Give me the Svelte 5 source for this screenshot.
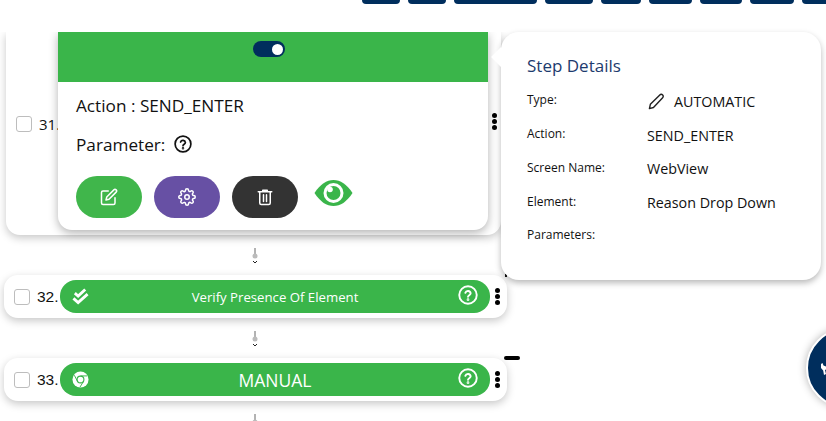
<script lang="ts">
  const topButtons = [38, 38, 83, 48, 40, 43, 42, 44, 40];

  const details = [
    { label: 'Type:', value: 'AUTOMATIC', pencil: true },
    { label: 'Action:', value: 'SEND_ENTER' },
    { label: 'Screen Name:', value: 'WebView' },
    { label: 'Element:', value: 'Reason Drop Down' },
    { label: 'Parameters:', value: '' }
  ];
</script>

{#snippet help(cls)}
  <svg class={cls} viewBox="0 0 24 24" fill="none" stroke="currentColor" stroke-width="2.3" stroke-linecap="round">
    <circle cx="12" cy="12" r="10.5" />
    <path d="M8.8 9.4a3.3 3.3 0 0 1 6.4 .6c0 2.1-3.2 2.4-3.2 4.2" />
    <circle cx="12" cy="17.6" r="0.5" fill="currentColor" />
  </svg>
{/snippet}

{#snippet dots()}
  <div class="dots"><span></span><span></span><span></span></div>
{/snippet}

{#snippet connector()}
  <div class="connector">
    <svg width="8" height="16" viewBox="0 0 8 16" fill="none">
      <path d="M4 0v9" stroke="#666" stroke-width="1" />
      <circle cx="4" cy="8" r="2.5" fill="#bbb" />
      <path d="M2 13l2 2 2-2" stroke="#222" stroke-width="1" />
    </svg>
  </div>
{/snippet}

<div class="page">
  <div class="topbar">
    {#each topButtons as w}
      <div class="topbtn" style="width: {w}px"></div>
    {/each}
  </div>

  <div class="list">
    <div class="row first">
      <div class="check"></div>
      <span class="num first-num">31.</span>
      <div class="card">
        <div class="card-head">
          <div class="toggle"><span></span></div>
        </div>
        <div class="card-body">
          <div class="action">Action : SEND_ENTER</div>
          <div class="param">Parameter: {@render help('param-help')}</div>
          <div class="buttons">
            <button class="pill-btn green" aria-label="Edit">
              <svg viewBox="0 0 24 24" fill="none" stroke="#fff" stroke-width="2" stroke-linecap="round" stroke-linejoin="round">
                <path d="M11 4H4a2 2 0 0 0-2 2v14a2 2 0 0 0 2 2h14a2 2 0 0 0 2-2v-7" />
                <path d="M18.5 2.5a2.121 2.121 0 0 1 3 3L12 15l-4 1 1-4 9.5-9.5z" />
              </svg>
            </button>
            <button class="pill-btn purple" aria-label="Settings">
              <svg viewBox="0 0 24 24" fill="none" stroke="#fff" stroke-width="2" stroke-linecap="round" stroke-linejoin="round">
                <circle cx="12" cy="12" r="3" />
                <path d="M19.4 15a1.65 1.65 0 0 0 .33 1.82l.06.06a2 2 0 0 1 0 2.83 2 2 0 0 1-2.83 0l-.06-.06a1.65 1.65 0 0 0-1.82-.33 1.65 1.65 0 0 0-1 1.51V21a2 2 0 0 1-2 2 2 2 0 0 1-2-2v-.09A1.65 1.65 0 0 0 9 19.4a1.65 1.65 0 0 0-1.82.33l-.06.06a2 2 0 0 1-2.83 0 2 2 0 0 1 0-2.83l.06-.06a1.65 1.65 0 0 0 .33-1.82 1.65 1.65 0 0 0-1.51-1H3a2 2 0 0 1-2-2 2 2 0 0 1 2-2h.09A1.65 1.65 0 0 0 4.6 9a1.65 1.65 0 0 0-.33-1.82l-.06-.06a2 2 0 0 1 0-2.83 2 2 0 0 1 2.83 0l.06.06a1.65 1.65 0 0 0 1.82.33H9a1.65 1.65 0 0 0 1-1.51V3a2 2 0 0 1 2-2 2 2 0 0 1 2 2v.09a1.65 1.65 0 0 0 1 1.51 1.65 1.65 0 0 0 1.82-.33l.06-.06a2 2 0 0 1 2.83 0 2 2 0 0 1 0 2.83l-.06.06a1.65 1.65 0 0 0-.33 1.82V9a1.65 1.65 0 0 0 1.51 1H21a2 2 0 0 1 2 2 2 2 0 0 1-2 2h-.09a1.65 1.65 0 0 0-1.51 1z" />
              </svg>
            </button>
            <button class="pill-btn dark" aria-label="Delete">
              <svg viewBox="0 0 24 24" fill="none" stroke="#fff" stroke-width="2" stroke-linecap="round" stroke-linejoin="round">
                <path d="M3 5h18M9 5V3h6v2" />
                <path d="M5 5v15a2 2 0 0 0 2 2h10a2 2 0 0 0 2-2V5" />
                <path d="M10 9v9M14 9v9" />
              </svg>
            </button>
            <svg class="eye" viewBox="0 0 38 26">
              <path d="M0 13C6 4 12 0 19 0s13 4 19 13c-6 9-12 13-19 13S6 22 0 13z" fill="#3ab54a" />
              <circle cx="19" cy="13" r="10" fill="#fff" />
              <circle cx="19" cy="13" r="7" fill="#3ab54a" />
              <circle cx="15.5" cy="9.5" r="2.8" fill="#fff" />
            </svg>
          </div>
        </div>
      </div>
      {@render dots()}
    </div>

    {@render connector()}

    <div class="row">
      <div class="check"></div>
      <span class="num">32.</span>
      <div class="step">
        <svg class="step-icon" viewBox="0 0 18 18" fill="none" stroke="#fff" stroke-width="3">
          <path d="M3 5.5l3.5 3L14 1.5" />
          <path d="M1.5 11l5 4.5L16.5 6.5" />
        </svg>
        <span class="step-label">Verify Presence Of Element</span>
        {@render help('step-help')}
      </div>
      {@render dots()}
    </div>

    {@render connector()}

    <div class="row">
      <div class="check"></div>
      <span class="num">33.</span>
      <div class="step">
        <svg class="step-icon" viewBox="0 0 18 18" fill="none">
          <circle cx="9" cy="9" r="8.5" fill="#fff" />
          <circle cx="9" cy="9" r="3.6" stroke="#3ab54a" stroke-width="1.2" />
          <path d="M9 5.2h7M5.8 11L2.5 4.5M12.2 11L8.5 17" stroke="#3ab54a" stroke-width="1" />
        </svg>
        <span class="step-label big">MANUAL</span>
        {@render help('step-help')}
      </div>
      {@render dots()}
    </div>

    {@render connector()}
  </div>

  <div class="corner"></div>
  <div class="dash"></div>

  <aside class="panel">
    <div class="arrow"></div>
    <h3>Step Details</h3>
    <div class="detail-grid">
      {#each details as d}
        <div class="label">{d.label}</div>
        <div class="value">
          {#if d.pencil}
            <svg class="pencil" viewBox="0 0 18 18" fill="none" stroke="#222" stroke-width="1.5" stroke-linejoin="round">
              <path d="M1.5 16.5l1-4.5L12.5 2a2.1 2.1 0 0 1 3 0 2.1 2.1 0 0 1 0 3L5.8 15.3z" />
            </svg>
          {/if}
          {d.value}
        </div>
      {/each}
    </div>
  </aside>

  <div class="fab">
    <svg width="6" height="14" viewBox="0 0 6 14" fill="#fff">
      <path d="M0 3l1.5-1 1 2.5L6 6v2L4 9l1 4-2 1-.8-4.500L0 7z" />
    </svg>
  </div>
</div>

<style>
  :global(body) {
    background: #fff;
    font-family: 'Open Sans', sans-serif;
  }

  .page {
    position: relative;
    width: 826px;
    height: 421px;
    overflow: hidden;
    background: #fff;
    color: #111;
  }

  .topbar {
    display: flex;
    gap: 8px;
    height: 4px;
    padding-left: 362px;
  }

  .topbtn {
    flex: none;
    height: 4px;
    background: #002e5d;
    border-radius: 0 0 4px 4px;
  }

  .list {
    margin-top: 28px;
    height: 389px;
    overflow: hidden;
    padding-bottom: 10px;
    box-sizing: border-box;
  }

  .row {
    display: flex;
    align-items: center;
    width: 503px;
    height: 43px;
    margin-left: 4px;
    background: #fff;
    border-radius: 14px;
    box-shadow: 0 3px 8px rgba(0, 0, 0, 0.22);
    box-sizing: border-box;
    padding-left: 10px;
  }

  .row.first {
    width: 495px;
    height: 203px;
    margin-left: 6px;
    padding-left: 10px;
    border-radius: 0 0 14px 14px;
  }

  .check {
    flex: none;
    width: 14px;
    height: 14px;
    border: 1px solid #bdbdbd;
    border-radius: 3px;
    background: #fff;
  }

  .first .check {
    margin-bottom: 19px;
  }

  .num {
    flex: none;
    width: 23px;
    margin-left: 7px;
    font-family: 'Liberation Sans', sans-serif;
    font-size: 15.5px;
  }

  .first-num {
    width: 19px;
    margin-left: 7px;
    margin-bottom: 20px;
    font-family: 'Open Sans', sans-serif;
    font-size: 15px;
  }

  .card {
    flex: none;
    align-self: flex-start;
    width: 430px;
    height: 198px;
    background: #fff;
    border-radius: 0 0 14px 14px;
    box-shadow: 0 3px 10px rgba(0, 0, 0, 0.3);
  }

  .card-head {
    display: flex;
    justify-content: center;
    padding: 9px 8px 0 0;
    height: 50px;
    box-sizing: border-box;
    background: #3ab54a;
  }

  .toggle {
    display: flex;
    align-items: center;
    justify-content: flex-end;
    width: 32px;
    height: 16px;
    padding-right: 2px;
    box-sizing: border-box;
    background: #002e5d;
    border-radius: 8px;
  }

  .toggle span {
    width: 11px;
    height: 11px;
    background: #fff;
    border-radius: 50%;
  }

  .card-body {
    padding: 12px 0 0 18px;
  }

  .action,
  .param {
    font-size: 17.2px;
    line-height: 24px;
  }

  .param {
    display: flex;
    align-items: center;
    gap: 9px;
    margin-top: 15px;
  }

  .param-help {
    width: 18px;
    height: 18px;
    color: #111;
    margin-top: -2px;
  }

  .buttons {
    display: flex;
    align-items: flex-start;
    gap: 12px;
    margin-top: 19px;
  }

  .pill-btn {
    display: flex;
    align-items: center;
    justify-content: center;
    width: 66px;
    height: 42px;
    border: 0;
    border-radius: 21px;
    padding: 0;
  }

  .pill-btn svg {
    width: 18px;
    height: 18px;
  }

  .green {
    background: #40b64b;
  }

  .purple {
    background: #6750a4;
  }

  .dark {
    background: #333;
  }

  .eye {
    width: 39px;
    height: 26px;
    margin: 4px 0 0 4px;
  }

  .dots {
    display: flex;
    flex-direction: column;
    gap: 1px;
    margin-left: 5px;
  }

  .first .dots {
    margin-left: 4px;
    margin-bottom: 24px;
  }

  .dots span {
    width: 5px;
    height: 5px;
    background: #000;
    border-radius: 50%;
  }

  .connector {
    display: flex;
    justify-content: center;
    align-items: flex-start;
    width: 510px;
    height: 40px;
    padding-top: 13px;
    box-sizing: border-box;
  }

  .step {
    flex: none;
    position: relative;
    display: flex;
    align-items: center;
    justify-content: center;
    width: 430px;
    height: 33px;
    background: #3ab54a;
    border-radius: 16px;
    color: #fff;
  }

  .step-icon {
    position: absolute;
    left: 12px;
    top: 8px;
    width: 17px;
    height: 17px;
  }

  .step-label {
    font-size: 13.2px;
    margin-top: 1px;
  }

  .step-label.big {
    font-size: 17.5px;
  }

  .step :global(.step-help) {
    position: absolute;
    right: 12px;
    top: 5px;
    width: 20px;
    height: 20px;
    color: #fff;
  }

  .corner {
    position: absolute;
    left: 505px;
    top: 274px;
    width: 2px;
    height: 3px;
    background: #111;
  }

  .dash {
    position: absolute;
    left: 504px;
    top: 356px;
    width: 16px;
    height: 4px;
    background: #000;
    border-radius: 2px;
  }

  .panel {
    position: absolute;
    left: 501px;
    top: 32px;
    width: 320px;
    height: 248px;
    box-sizing: border-box;
    padding: 22px 0 0 26px;
    background: #fff;
    border-radius: 18px;
    box-shadow: 0 3px 6px rgba(0, 0, 0, 0.28);
  }

  .arrow {
    position: absolute;
    left: -7px;
    top: 18px;
    width: 14px;
    height: 14px;
    background: #fff;
    transform: rotate(45deg);
  }

  h3 {
    margin: 0;
    font-size: 17px;
    font-weight: 400;
    line-height: 24px;
    color: #1d3b6e;
  }

  .detail-grid {
    display: grid;
    grid-template-columns: 120px 1fr;
    grid-auto-rows: 33.75px;
    margin-top: 6px;
    align-items: center;
  }

  .label {
    font-size: 12px;
    margin-top: -2px;
  }

  .value {
    display: flex;
    align-items: center;
    font-size: 14.3px;
    margin-top: 1px;
  }

  .pencil {
    width: 17px;
    height: 17px;
    margin: 0 9px 0 1px;
  }

  .fab {
    position: absolute;
    left: 806px;
    top: 328px;
    display: flex;
    align-items: center;
    width: 80px;
    height: 80px;
    padding-left: 13px;
    box-sizing: border-box;
    background: #002e5d;
    border: 2px solid #fff;
    border-radius: 50%;
    box-shadow: 0 0 8px rgba(0, 0, 0, 0.3);
  }
</style>
